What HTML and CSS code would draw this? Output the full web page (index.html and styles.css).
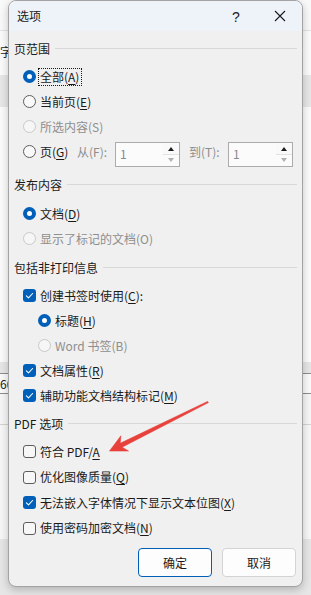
FILE: index.html
```html
<!DOCTYPE html>
<html lang="zh-CN">
<head>
<meta charset="utf-8">
<title>选项</title>
<link rel="stylesheet" href="styles.css">
</head>
<body>
<div class="backdrop">
  <div class="band b-top"></div>
  <div class="band b-line-light"></div>
  <div class="band b-a"><span class="peek peek-1">字:</span></div>
  <div class="band b-gray"></div>
  <div class="band b-b"></div>
  <div class="band b-gray2"></div>
  <div class="band b-line-dark"></div>
  <div class="band b-c"><span class="peek peek-2">60</span></div>
  <div class="band b-line-dark"></div>
  <div class="band b-d"></div>
  <div class="band b-line-mid"></div>
  <div class="band b-e"></div>
  <div class="band b-bottom"></div>
</div>

<div class="dialog">
  <div class="titlebar">
    <span class="title">选项</span>
    <span class="tb-btn help">?</span>
    <span class="tb-btn close">
      <svg width="12" height="12" viewBox="0 0 12 12"><path d="M1 1L11 11M11 1L1 11" stroke="#1a1a1a" stroke-width="1.1" fill="none"/></svg>
    </span>
  </div>

  <div class="content">
    <div class="head h1"><span>页范围</span><i class="rule"></i></div>
    <div class="rows r1">
      <div class="row"><span class="radio on"></span><span class="label focus">全部(<u>A</u>)</span></div>
      <div class="row"><span class="radio"></span><span class="label">当前页(<u>E</u>)</span></div>
      <div class="row"><span class="radio off"></span><span class="label dim">所选内容(S)</span></div>
      <div class="row">
        <span class="radio"></span><span class="label pg">页(<u>G</u>)</span>
        <span class="dim spin-lbl from">从(F):</span>
        <span class="spin"><span class="val">1</span><span class="btns"><span class="up"><i></i></span><span class="dn"><i></i></span></span></span>
        <span class="dim spin-lbl to">到(T):</span>
        <span class="spin"><span class="val">1</span><span class="btns"><span class="up"><i></i></span><span class="dn"><i></i></span></span></span>
      </div>
    </div>

    <div class="head h2"><span>发布内容</span><i class="rule"></i></div>
    <div class="rows r2">
      <div class="row"><span class="radio on"></span><span class="label">文档(<u>D</u>)</span></div>
      <div class="row"><span class="radio off"></span><span class="label dim">显示了标记的文档(O)</span></div>
    </div>

    <div class="head h3"><span>包括非打印信息</span><i class="rule"></i></div>
    <div class="rows r3">
      <div class="row"><span class="check on"><svg viewBox="0 0 13 13"><path d="M3.4 6.9L5.5 8.9L9.6 4.5" /></svg></span><span class="label">创建书签时使用(<u>C</u>):</span></div>
      <div class="row sub"><span class="radio on"></span><span class="label">标题(<u>H</u>)</span></div>
      <div class="row sub"><span class="radio off"></span><span class="label dim">Word 书签(B)</span></div>
      <div class="row"><span class="check on"><svg viewBox="0 0 13 13"><path d="M3.4 6.9L5.5 8.9L9.6 4.5" /></svg></span><span class="label">文档属性(<u>R</u>)</span></div>
      <div class="row"><span class="check on"><svg viewBox="0 0 13 13"><path d="M3.4 6.9L5.5 8.9L9.6 4.5" /></svg></span><span class="label">辅助功能文档结构标记(<u>M</u>)</span></div>
    </div>

    <div class="head h4"><span>PDF 选项</span><i class="rule"></i></div>
    <div class="rows r4">
      <div class="row"><span class="check"></span><span class="label">符合 PDF/<u>A</u></span></div>
      <div class="row"><span class="check"></span><span class="label">优化图像质量(<u>Q</u>)</span></div>
      <div class="row"><span class="check on"><svg viewBox="0 0 13 13"><path d="M3.4 6.9L5.5 8.9L9.6 4.5" /></svg></span><span class="label">无法嵌入字体情况下显示文本位图(<u>X</u>)</span></div>
      <div class="row"><span class="check"></span><span class="label">使用密码加密文档(<u>N</u>)</span></div>
    </div>

    <div class="buttons">
      <span class="btn primary">确定</span>
      <span class="btn">取消</span>
    </div>
  </div>
</div>

<svg class="arrow" width="311" height="595" viewBox="0 0 311 595">
  <polygon points="207.6,401.4 120.2,443.3 120.9,435.8 109.5,451 128.5,451 122.1,447.2 208.4,402.6" fill="#e8403a" stroke="#e8403a" stroke-width="0.6" stroke-linejoin="round"/>
</svg>
</body>
</html>
```

FILE: styles.css
```css
html, body {
  margin: 0;
  padding: 0;
}
body {
  width: 311px;
  height: 595px;
  overflow: hidden;
  position: relative;
  display: grid;
  grid-template: 595px / 311px;
  font-family: "Noto Sans CJK SC", "Noto Sans", sans-serif;
  font-size: 12px;
  color: #1a1a1a;
  background: #f8f8f8;
}

/* underlying window */
.backdrop {
  grid-area: 1 / 1;
  display: flex;
  flex-direction: column;
}
.band { flex: none; overflow: hidden; }
.b-top { height: 30px; background: #f9f9f9; }
.b-line-light { height: 1px; background: #e2e2e2; }
.b-a { height: 44px; background: #fbfbfb; display: flex; align-items: center; }
.b-gray { height: 32px; background: #e7e7e7; }
.b-b { height: 255px; background: #fbfbfb; }
.b-gray2 { height: 11px; background: #e6e6e6; }
.b-line-dark { height: 1px; background: #8d8d8d; }
.b-c { height: 19px; background: #fafafa; display: flex; align-items: center; }
.b-d { height: 30px; background: #f6f6f6; }
.b-line-mid { height: 1px; background: #d4d4d4; }
.b-e { height: 114px; background: #f7f7f7; }
.b-bottom { flex: 1; background: #e6e6e6; }
.peek { font-size: 12px; color: #222; white-space: nowrap; }
.peek-1 { margin-top: -4px; }

/* dialog */
.dialog {
  grid-area: 1 / 1;
  position: relative;
  z-index: 1;
  align-self: start;
  justify-self: start;
  margin-left: 8px;
  width: 295px;
  height: 587px;
  box-sizing: border-box;
  border: 1px solid #a3a3a3;
  border-radius: 8px;
  background: #f0f0f0;
  box-shadow: 0 3px 9px rgba(0, 0, 0, 0.22);
  overflow: hidden;
  display: flex;
  flex-direction: column;
}
.titlebar {
  height: 30px;
  flex: none;
  background: #eef2f9;
  display: flex;
  align-items: center;
  padding-left: 8px;
}
.title { flex: 1; line-height: 30px; }
.tb-btn {
  width: 44px;
  height: 30px;
  display: flex;
  align-items: center;
  justify-content: center;
  font-size: 14px;
  font-family: "Liberation Sans", sans-serif;
}
.help { padding-top: 1px; }
.close svg { display: block; }

.content {
  padding: 0 5px;
  display: flex;
  flex-direction: column;
}
.head {
  height: 18px;
  line-height: 18px;
  display: flex;
  align-items: center;
  gap: 5px;
}
.head .rule {
  flex: 1;
  height: 1px;
  background: #d9d9d9;
  margin-top: -1px;
}
.h1 { margin-top: 9px; }
.h2 { margin-top: 12px; }
.h3 { margin-top: 8px; }
.h4 { margin-top: 7px; }

.rows { display: flex; flex-direction: column; margin-top: 6px; }
.r2 { margin-top: 7px; }
.row {
  height: 25px;
  display: flex;
  align-items: center;
  padding-left: 9px;
  white-space: nowrap;
}
.r4 .row { height: 25.5px; }
.row.sub { padding-left: 24px; }
.label { margin-left: 4px; line-height: 16px; }
.dim { color: #8e8e8e; }
u { text-decoration: underline; text-underline-offset: 2px; text-decoration-thickness: 1px; }
.focus {
  border: 1px dotted #1a1a1a;
  padding: 0 2px 0 1px;
  margin-left: 2px;
}

/* radio */
.radio {
  width: 13px;
  height: 13px;
  box-sizing: border-box;
  border-radius: 50%;
  border: 1px solid #5d5d5d;
  background: #f9f9f9;
  flex: none;
}
.radio.on {
  border: 4px solid #005fb8;
  background: #ffffff;
}
.radio.off {
  border-color: #c9c9c9;
  background: #f6f6f6;
}

/* checkbox */
.check {
  width: 13px;
  height: 13px;
  box-sizing: border-box;
  border-radius: 3px;
  border: 1px solid #5d5d5d;
  background: #f7f7f7;
  flex: none;
  display: block;
}
.check.on {
  border: none;
  background: #005fb8;
}
.check svg { display: block; width: 13px; height: 13px; }
.check path { fill: none; stroke: #ffffff; stroke-width: 1.1; stroke-linecap: round; stroke-linejoin: round; }

/* spin boxes */
.pg { width: 37px; }
.spin-lbl { line-height: 16px; }
.from { width: 38px; }
.to { width: 39px; margin-left: 9px; }
.spin {
  width: 65px;
  height: 25px;
  margin-top: 5px;
  box-sizing: border-box;
  border: 1px solid #ababab;
  background: #fbfbfb;
  display: flex;
}
.spin .val {
  flex: 1;
  padding-left: 4px;
  line-height: 21px;
  color: #8a8a8a;
  font-size: 12px;
}
.spin .btns {
  width: 16px;
  display: flex;
  flex-direction: column;
  margin: 1px 0 1px 0;
}
.spin .up, .spin .dn {
  flex: 1;
  display: flex;
  align-items: center;
  justify-content: center;
}
.spin .up { background: #f9f9f9; border-bottom: 1px solid #e2e2e2; }
.spin .up i {
  width: 0; height: 0;
  border-left: 3.5px solid transparent;
  border-right: 3.5px solid transparent;
  border-bottom: 4px solid #1e1e1e;
}
.spin .dn i {
  width: 0; height: 0;
  border-left: 3.5px solid transparent;
  border-right: 3.5px solid transparent;
  border-top: 4px solid #b0b0b0;
}

/* buttons */
.buttons {
  margin-top: 7px;
  display: flex;
  justify-content: flex-end;
  gap: 10px;
  padding-right: 1px;
}
.btn {
  width: 74px;
  height: 29px;
  box-sizing: border-box;
  border: 1px solid #d3d3d3;
  border-radius: 4px;
  background: #fdfdfd;
  display: flex;
  align-items: center;
  justify-content: center;
}
.btn.primary { border-color: #005fb8; }

/* annotation arrow overlay */
.arrow {
  position: absolute;
  left: 0;
  top: 0;
  z-index: 2;
  pointer-events: none;
}
```
